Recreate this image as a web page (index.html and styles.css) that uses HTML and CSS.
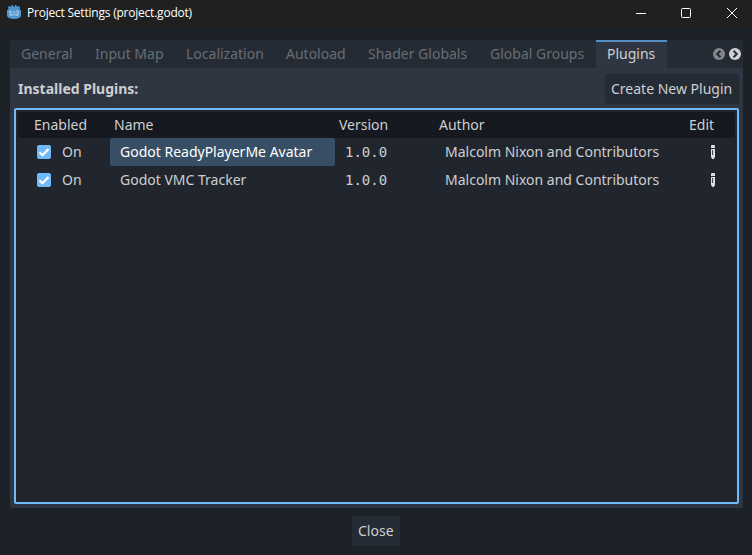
FILE: index.html
```html
<!DOCTYPE html>
<html lang="en">
<head>
<meta charset="utf-8">
<title>Project Settings (project.godot)</title>
<link rel="stylesheet" href="styles.css">
</head>
<body>
<header class="titlebar">
  <svg class="logo" width="14" height="14" viewBox="0 0 14 14">
    <path fill="#4a96cf" d="M4.500 0H6v1.500h2V0h1.500v1.500h1L12 1l1 1.500-.5 1.500.5 1h1v6c-1 2-3 3-7 3s-6-1-7-3V5h1l.5-1L1 2.500 2 1l1.500.5h1z"/>
    <path d="M2 9.500h1.500v1H5V9.700h4v.8h1.500v-1H12" fill="none" stroke="#b9dbf2" stroke-width=".8"/>
    <circle cx="3.800" cy="7" r="1.500" fill="#e8f3fa"/><circle cx="10.200" cy="7" r="1.500" fill="#e8f3fa"/>
    <circle cx="4" cy="7" r=".8" fill="#414042"/><circle cx="10" cy="7" r=".8" fill="#414042"/>
    <path d="M7 6.500v1.500" stroke="#d5e9f6" stroke-width="1"/>
  </svg>
  <span class="title">Project Settings (project.godot)</span>
  <svg class="controls" width="102" height="12" viewBox="0 0 102 12" fill="none" stroke="#fff">
    <path d="M0 6.500h10"/>
    <rect x="45.500" y="1.500" width="9" height="9" rx="1"/>
    <path d="M91 1l10 10M101 1L91 11"/>
  </svg>
</header>
<main class="panel">
  <nav class="tabs">
    <span class="tab w74">General</span>
    <span class="tab w91">Input Map</span>
    <span class="tab w100">Localization</span>
    <span class="tab w82">Autoload</span>
    <span class="tab w122">Shader Globals</span>
    <span class="tab w117">Global Groups</span>
    <span class="tab active">Plugins</span>
    <svg class="arrows" width="28" height="12" viewBox="0 0 28 12">
      <circle cx="6" cy="6" r="6" fill="#85878a"/>
      <path d="M7.500 2.700L4.200 6l3.300 3.300" fill="none" stroke="#252b35" stroke-width="2"/>
      <circle cx="22" cy="6" r="6" fill="#d0d1d2"/>
      <path d="M20.500 2.700L23.800 6l-3.300 3.300" fill="none" stroke="#252b35" stroke-width="2"/>
    </svg>
  </nav>
  <div class="toolbar">
    <strong>Installed Plugins:</strong>
    <button class="button create">Create New Plugin</button>
  </div>
  <section class="tree">
    <div class="row head">
      <span>Enabled</span><span>Name</span><span>Version</span><span>Author</span><span>Edit</span>
    </div>
    <div class="row">
      <span class="check"><svg width="14" height="14" viewBox="0 0 14 14"><rect width="14" height="14" rx="2" fill="#70bafa"/><path d="M2.500 7.300l3 3 6-6.300" fill="none" stroke="#fff" stroke-width="2.200"/></svg>On</span>
      <span class="cell selected">Godot ReadyPlayerMe Avatar</span>
      <span class="cell mono">1.0.0</span>
      <span class="cell">Malcolm Nixon and Contributors</span>
      <span class="edit"><svg width="4" height="14" viewBox="0 0 4 14"><path fill="#e0e0e0" fill-rule="evenodd" d="M0 3V1a1 1 0 0 1 1-1h2a1 1 0 0 1 1 1v2zM0 4h4v8l-1.300 2H1.300L0 12zM1.200 5v5h.9V5z"/></svg></span>
    </div>
    <div class="row">
      <span class="check"><svg width="14" height="14" viewBox="0 0 14 14"><rect width="14" height="14" rx="2" fill="#70bafa"/><path d="M2.500 7.300l3 3 6-6.300" fill="none" stroke="#fff" stroke-width="2.200"/></svg>On</span>
      <span class="cell">Godot VMC Tracker</span>
      <span class="cell mono">1.0.0</span>
      <span class="cell">Malcolm Nixon and Contributors</span>
      <span class="edit"><svg width="4" height="14" viewBox="0 0 4 14"><path fill="#e0e0e0" fill-rule="evenodd" d="M0 3V1a1 1 0 0 1 1-1h2a1 1 0 0 1 1 1v2zM0 4h4v8l-1.300 2H1.300L0 12zM1.200 5v5h.9V5z"/></svg></span>
    </div>
  </section>
</main>
<footer class="footer"><button class="button close">Close</button></footer>
</body>
</html>
```
FILE: styles.css
```css
* { box-sizing: border-box; }
body {
  margin: 0;
  height: 555px;
  overflow: hidden;
  background: #1d2229;
  color: #cdcfd2;
  font: 14px/20px "Noto Sans", sans-serif;
  white-space: nowrap;
}
svg { display: block; flex: none; }
.titlebar {
  display: flex;
  align-items: center;
  height: 28px;
  padding: 0 14px 3px 7px;
  background: #202020;
}
.logo { margin-bottom: 1px; }
.title {
  margin-left: 6px;
  color: #fff;
  font: 12px/16px "Open Sans", sans-serif;
  letter-spacing: -0.22px;
}
.controls { margin-left: auto; }
.panel {
  height: 468px;
  margin: 12px 9px 0 10px;
  background: #303641;
  border-radius: 2px;
}
.tabs {
  display: flex;
  align-items: center;
  height: 28px;
  padding-right: 2px;
  background: #252b35;
  border-radius: 2px 2px 0 0;
}
.tab {
  height: 28px;
  padding: 4px 0 0 11px;
  color: #696d73;
}
.w74 { width: 74px; }
.w91 { width: 91px; }
.w100 { width: 100px; }
.w82 { width: 82px; }
.w122 { width: 122px; }
.w117 { width: 117px; }
.active {
  width: 71px;
  padding-top: 2px;
  border-top: 2px solid #5490c4;
  background: #303641;
  color: #cdcfd2;
}
.arrows { margin-left: auto; }
.toolbar {
  display: flex;
  align-items: center;
  justify-content: space-between;
  height: 40px;
  padding: 2px 4px 0 8px;
}
.button {
  height: 30px;
  padding: 0 0 0 6px;
  border: 0;
  border-radius: 2px;
  background: #252b35;
  color: #cdcfd2;
  font: inherit;
  text-align: left;
}
.create { width: 134px; }
.close { width: 48px; }
.tree {
  height: 396px;
  margin: 0 4px;
  padding: 2px;
  border: 2px solid #70bafa;
  border-radius: 2px;
  background: #21262e;
}
.row {
  display: grid;
  grid-template-columns: 80px 225px 100px 250px 40px;
  align-items: center;
  height: 28px;
  padding-left: 12px;
}
.head {
  height: 26px;
  border-radius: 2px;
  background: #16191f;
}
.head span { padding-left: 4px; }
.check {
  display: flex;
  align-items: center;
  gap: 11px;
  padding-left: 7px;
}
.cell {
  height: 28px;
  padding: 4px 0 0 10px;
}
.selected {
  border-radius: 2px;
  background: #374e65;
  color: #fff;
}
.mono { font-family: "DejaVu Sans Mono", monospace; }
.edit { padding-left: 26px; }
.footer {
  display: flex;
  justify-content: center;
  padding-top: 8px;
}
```
